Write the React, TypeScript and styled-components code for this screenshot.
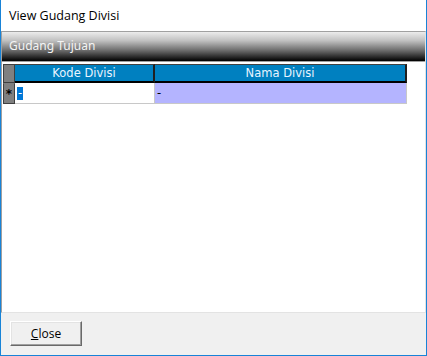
import React from 'react';
import styled, { createGlobalStyle } from 'styled-components';

const GlobalStyle = createGlobalStyle`
  html, body { margin: 0; padding: 0; background: #ffffff; }
  * { box-sizing: border-box; }
`;

const Window = styled.div`
  width: 427px;
  height: 356px;
  display: flex;
  flex-direction: column;
  background: #ffffff;
  border: 1px solid #1883d7;
  border-top: none;
`;

const TitleBar = styled.div`
  height: 31px;
  display: flex;
  align-items: center;
  padding-left: 8px;
  padding-bottom: 1px;
  font-family: 'Open Sans', sans-serif;
  font-size: 12.5px;
  color: #000000;
`;

const Panel = styled.div`
  flex: 1;
  display: flex;
  flex-direction: column;
  border: 1px solid #a0a0a0;
  border-bottom-color: #e3e3e3;
  border-right-color: #e3e3e3;
`;

const Caption = styled.div`
  height: 30px;
  display: flex;
  align-items: center;
  padding-left: 7px;
  padding-bottom: 3px;
  background: linear-gradient(to bottom, #ececec 0%, #c0c0c0 30%, #686868 65%, #000000 100%);
  border-bottom: 1px solid #a0a0a0;
  font-family: 'Noto Sans', sans-serif;
  font-size: 12px;
  color: #f4f4f4;
`;

const GridArea = styled.div`
  flex: 1;
  background: #ffffff;
  padding: 2px 0 0 1px;
`;

const GridTable = styled.div`
  display: grid;
  grid-template-columns: 12px 140px 252px;
  font-family: 'DejaVu Sans', sans-serif;
  font-size: 11.5px;
`;

const Indicator = styled.div<{ $head?: boolean }>`
  height: ${(p) => (p.$head ? '19px' : '21px')};
  background: #808080;
  border: 1px solid #404040;
  border-top-color: ${(p) => (p.$head ? '#404040' : '#808080')};
  display: flex;
  align-items: center;
  justify-content: center;
  color: #000000;
  font-size: 12px;
  font-weight: bold;
  line-height: 1;
`;

const HeadCell = styled.div`
  height: 19px;
  background: #0080c0;
  color: #e8f4ff;
  display: flex;
  align-items: center;
  justify-content: center;
  border-top: 1px solid #404040;
  border-right: 2px solid #202020;
  border-bottom: 2px solid #000000;
`;

const Cell = styled.div<{ $bg: string }>`
  height: 21px;
  background: ${(p) => p.$bg};
  display: flex;
  align-items: center;
  padding-left: 2px;
  border-right: 1px solid #c8c8c8;
  border-bottom: 1px solid #c8c8c8;
  color: #000000;
`;

const Selected = styled.span`
  background: #0078d7;
  color: #ffffff;
  padding: 0 1px;
  line-height: 13px;
`;

const Footer = styled.div`
  height: 42px;
  background: #f0f0f0;
  display: flex;
  align-items: center;
  padding-left: 9px;
  padding-bottom: 2px;
`;

const Button = styled.button`
  width: 72px;
  height: 25px;
  background: #f0f0f0;
  border: 1px solid;
  border-color: #ffffff #696969 #696969 #ffffff;
  box-shadow: inset -1px -1px 0 #a0a0a0, inset 1px 1px 0 #e3e3e3;
  font-family: 'Open Sans', sans-serif;
  font-size: 12px;
  color: #000000;
  padding: 0;
  text-align: center;

  u { text-decoration: underline; }
`;

export default function App() {
  return (
    <>
      <GlobalStyle />
      <Window>
        <TitleBar>View Gudang Divisi</TitleBar>
        <Panel>
          <Caption>Gudang Tujuan</Caption>
          <GridArea>
            <GridTable>
              <Indicator $head />
              <HeadCell>Kode Divisi</HeadCell>
              <HeadCell>Nama Divisi</HeadCell>
              <Indicator>*</Indicator>
              <Cell $bg="#ffffff">
                <Selected>-</Selected>
              </Cell>
              <Cell $bg="#b4b4ff">-</Cell>
            </GridTable>
          </GridArea>
        </Panel>
        <Footer>
          <Button>
            <u>C</u>lose
          </Button>
        </Footer>
      </Window>
    </>
  );
}
